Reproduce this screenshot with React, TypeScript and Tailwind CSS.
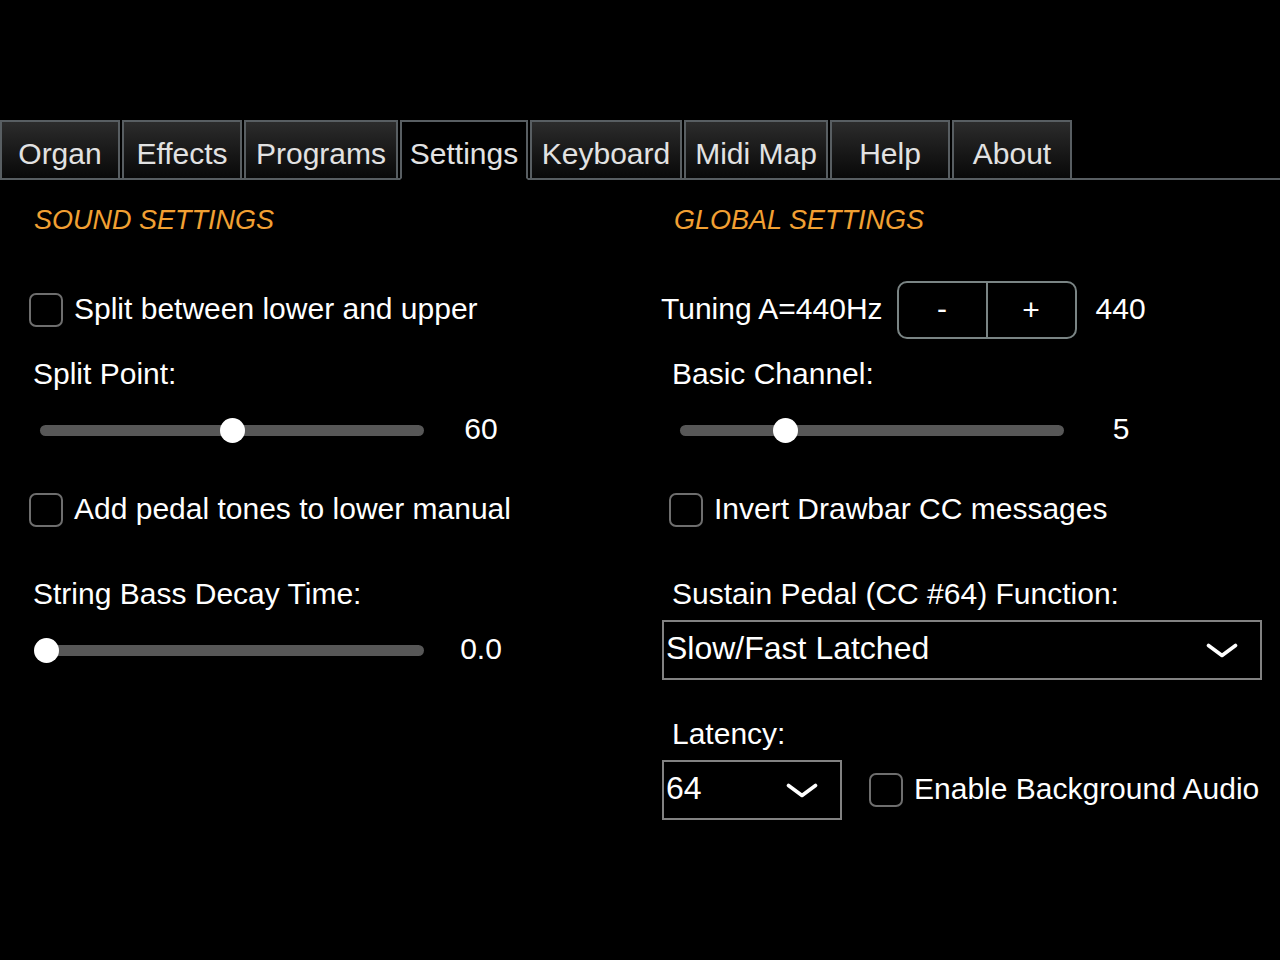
import React from 'react';

const tabs = [
    { label: 'Organ', w: 'w-[120px]' },
    { label: 'Effects', w: 'w-[120px]' },
    { label: 'Programs', w: 'w-[154px]' },
    { label: 'Settings', w: 'w-[128px]', active: true },
    { label: 'Keyboard', w: 'w-[152px]' },
    { label: 'Midi Map', w: 'w-[144px]' },
    { label: 'Help', w: 'w-[120px]' },
    { label: 'About', w: 'w-[120px]' },
];

const Checkbox: React.FC = () => (
    <div className="w-[34px] h-[34px] rounded-[7px] border-2 border-[#6e6e6e] shrink-0" />
);

const CheckRow: React.FC<{ label: string; className?: string }> = ({ label, className }) => (
    <div className={`flex items-center h-[34px] ${className ?? ''}`}>
        <Checkbox />
        <span className="ml-[11px] pb-[4px] text-[30px] text-white whitespace-nowrap">{label}</span>
    </div>
);

const Label: React.FC<{ text: string; className?: string }> = ({ text, className }) => (
    <div className={`h-[34px] flex items-center pb-[3px] text-[30px] text-white whitespace-nowrap ${className ?? ''}`}>{text}</div>
);

// thumb = offset of the thumb centre from the track start, in px
const Slider: React.FC<{ thumb: number; value: string; className?: string }> = ({ thumb, value, className }) => (
    <div className={`flex items-center h-[30px] ${className ?? ''}`}>
        <div className="relative w-[384px] h-[11px] rounded-full bg-[#575757]">
            <div
                className="absolute top-1/2 w-[25px] h-[25px] -mt-[12.5px] -ml-[12.5px] rounded-full bg-white"
                style={{ left: thumb }}
            />
        </div>
        <div className="ml-[17px] w-[80px] pb-[4px] text-center text-[30px] text-white">{value}</div>
    </div>
);

const Chevron: React.FC = () => (
    <svg width="32" height="15" viewBox="0 0 32 15" className="shrink-0">
        <path d="M2.5 2.5 L16 12.5 L29.5 2.5" fill="none" stroke="white" strokeWidth="3.6" strokeLinecap="round" strokeLinejoin="round" />
    </svg>
);

const Select: React.FC<{ value: string; className: string }> = ({ value, className }) => (
    <div className={`flex items-center justify-between h-[60px] border-2 border-[#828282] pl-[2px] pr-[22px] ${className}`}>
        <span className="text-[32px] text-white leading-none -mt-[4px]">{value}</span>
        <Chevron />
    </div>
);

export default function App() {
    return (
        <div
            className="w-[1280px] h-[960px] bg-black overflow-hidden"
            style={{ fontFamily: '"Liberation Sans", Arial, Helvetica, sans-serif' }}
        >
            <div className="pt-[120px]">
                <div className="flex gap-[2px] h-[60px] border-b-2 border-[#585e62]">
                    {tabs.map((t) => (
                        <div
                            key={t.label}
                            className={`${t.w} h-[60px] -mb-[2px] border-2 flex items-center justify-center pt-[7px] text-[30px] text-[#e2e2e2] ${
                                t.active
                                    ? 'bg-black border-[#585e62] border-b-black'
                                    : 'bg-gradient-to-b from-[#2c2c2c] to-[#090909] border-[#585e62]'
                            }`}
                        >
                            {t.label}
                        </div>
                    ))}
                </div>
            </div>

            <div className="grid grid-cols-2">
                {/* left column */}
                <div className="flex flex-col">
                    <div className="mt-[24px] ml-[34px] h-[32px] flex items-center text-[27px] italic text-[#f2a033]">SOUND SETTINGS</div>
                    <CheckRow label="Split between lower and upper" className="mt-[57px] ml-[29px]" />
                    <Label text="Split Point:" className="mt-[31px] ml-[33px]" />
                    <Slider thumb={192} value="60" className="mt-[23px] ml-[40px]" />
                    <CheckRow label="Add pedal tones to lower manual" className="mt-[48px] ml-[29px]" />
                    <Label text="String Bass Decay Time:" className="mt-[51px] ml-[33px]" />
                    <Slider thumb={6} value="0.0" className="mt-[23px] ml-[40px]" />
                </div>

                {/* right column */}
                <div className="flex flex-col">
                    <div className="mt-[24px] ml-[34px] h-[32px] flex items-center text-[27px] italic text-[#f2a033]">GLOBAL SETTINGS</div>
                    <div className="mt-[45px] ml-[21px] flex items-center h-[58px]">
                        <span className="pb-[4px] text-[30px] text-white whitespace-nowrap">Tuning A=440Hz</span>
                        <div className="ml-[14px] flex h-[58px] w-[180px] border-2 border-[#7a8484] rounded-[10px]">
                            <div className="flex-1 flex items-center justify-center pb-[3px] text-[30px] text-white border-r-2 border-[#7a8484]">-</div>
                            <div className="flex-1 flex items-center justify-center pb-[2px] text-[30px] text-white">+</div>
                        </div>
                        <span className="ml-[19px] pb-[4px] text-[30px] text-white">440</span>
                    </div>
                    <Label text="Basic Channel:" className="mt-[19px] ml-[32px]" />
                    <Slider thumb={105} value="5" className="mt-[23px] ml-[40px]" />
                    <CheckRow label="Invert Drawbar CC messages" className="mt-[48px] ml-[29px]" />
                    <Label text="Sustain Pedal (CC #64) Function:" className="mt-[51px] ml-[32px]" />
                    <Select value="Slow/Fast Latched" className="mt-[8px] ml-[22px] w-[600px]" />
                    <Label text="Latency:" className="mt-[38px] ml-[32px]" />
                    <div className="mt-[8px] ml-[22px] flex items-center">
                        <Select value="64" className="w-[180px]" />
                        <CheckRow label="Enable Background Audio" className="ml-[27px]" />
                    </div>
                </div>
            </div>
        </div>
    );
}
